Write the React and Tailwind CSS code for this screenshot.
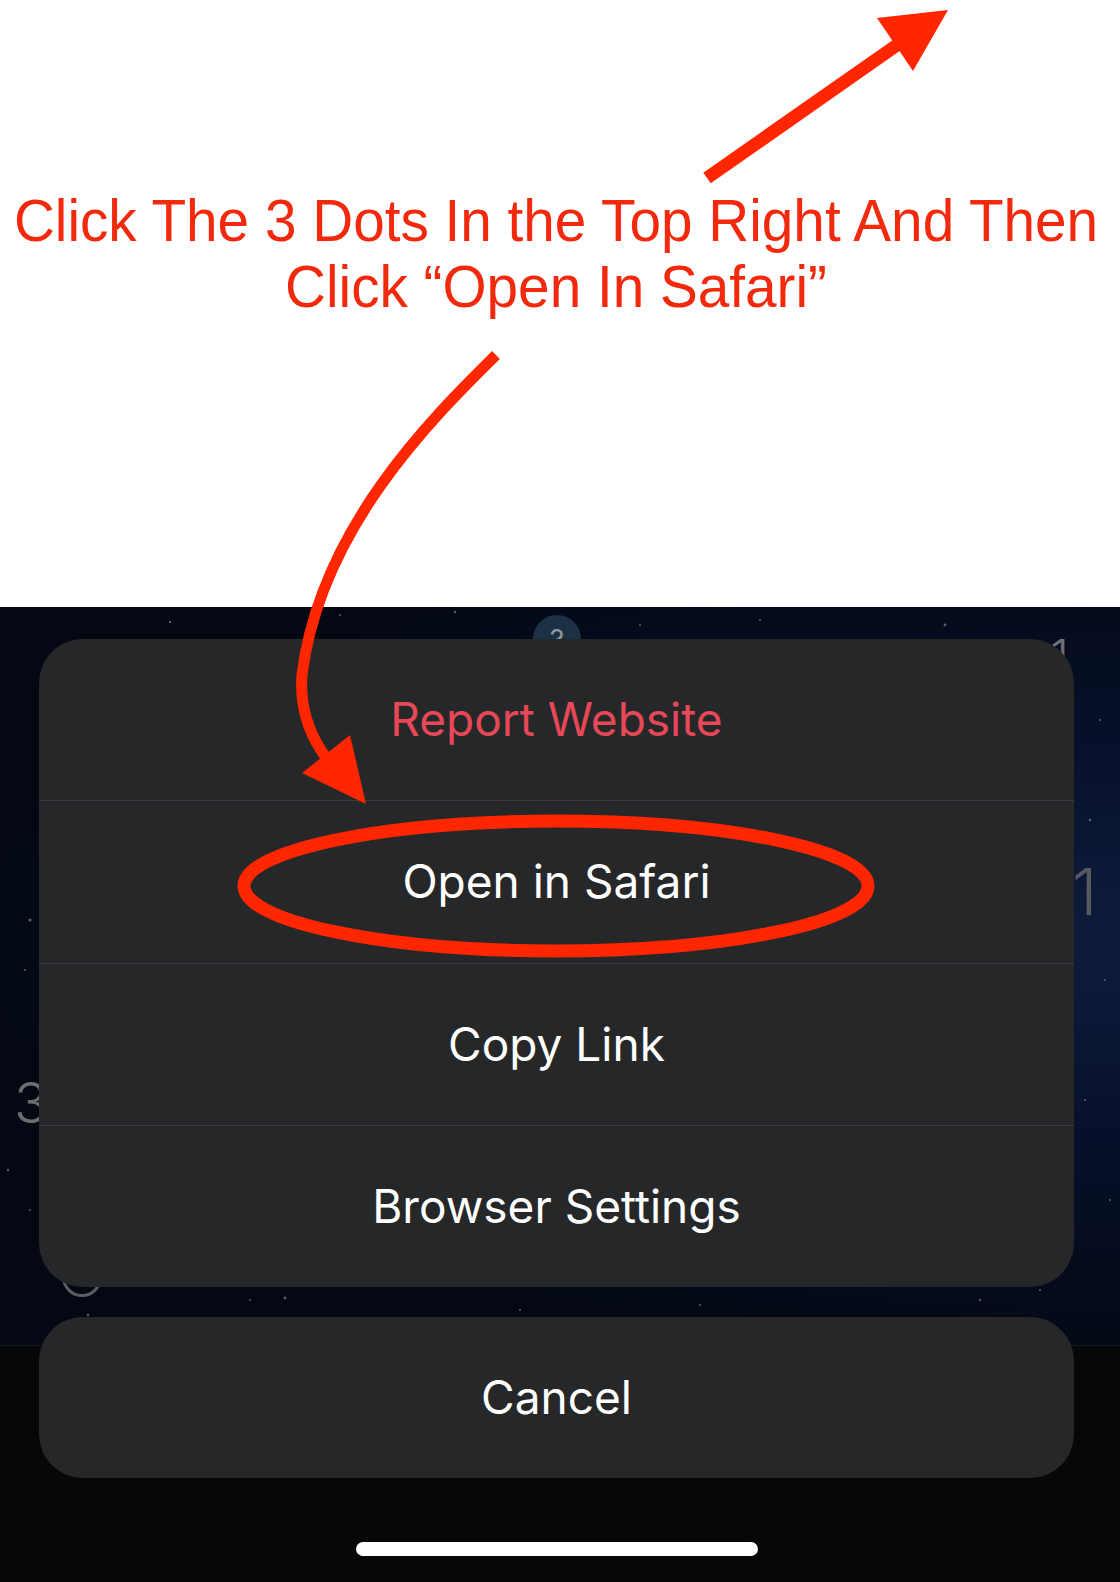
const stars = [
  [170, 622, 1.2], [205, 640, 1], [340, 615, 1], [455, 612, 1.2], [640, 625, 1], [760, 620, 1],
  [945, 625, 1.4], [995, 650, 1], [1100, 720, 1], [1090, 820, 1.2], [1105, 980, 1], [1085, 1100, 1],
  [30, 920, 1.6], [25, 970, 1], [8, 1170, 1.2], [30, 1210, 1], [88, 1315, 1.2], [250, 1300, 1],
  [285, 1298, 1.4], [350, 1330, 1], [520, 1310, 1], [700, 1305, 1], [840, 1320, 1], [980, 1300, 1.2],
  [1040, 1290, 1], [1110, 1200, 1],
];

function Annotations() {
  return (
    <svg className="absolute inset-0 pointer-events-none" width="1120" height="1582" viewBox="0 0 1120 1582">
      {/* arrow to the top right */}
      <line x1="707" y1="178" x2="897" y2="45" stroke="#ff2600" strokeWidth="13" />
      <polygon points="877,18 948,10 913,71" fill="#ff2600" />
      {/* curved arrow down to the menu */}
      <path
        d="M496 355 C430 420 320 530 302 675 C299 712 312 742 334 768"
        fill="none"
        stroke="#ff2600"
        strokeWidth="11"
      />
      <polygon points="302,773 350,735 366,804" fill="#ff2600" />
      {/* circle round Open in Safari */}
      <ellipse cx="556" cy="886" rx="312" ry="65" fill="none" stroke="#ff2600" strokeWidth="13" />
    </svg>
  );
}

function Backdrop() {
  return (
    <div className="absolute left-0 top-0 w-full h-[739px] bg-[radial-gradient(ellipse_at_100%_45%,#0e1c3c_0%,#07102a_35%,#030812_75%)] border-b border-[#18191c]">
      <svg className="absolute inset-0" width="1120" height="739">
        {stars.map(([x, y, r], i) => (
          <circle key={i} cx={x} cy={y - 607} r={r} fill="#8a9ab8" opacity="0.6" />
        ))}
      </svg>
      <div className="absolute left-[533px] top-[8px] w-[48px] h-[48px] rounded-full bg-[#1c3144] flex items-start justify-center pt-[4px] text-[#8d959c] text-[28px] font-['Inter',sans-serif]">
        ?
      </div>
      <div className="absolute left-[1050px] top-[26px] text-[#6d6f73] text-[48px] leading-none font-['Inter',sans-serif] font-light">1</div>
      <div className="absolute left-[1072px] top-[253px] text-[#56595e] text-[64px] leading-none font-['Inter',sans-serif] font-light">1</div>
      <div className="absolute left-[14px] top-[468px] text-[#6b6d71] text-[56px] leading-none font-['Inter',sans-serif] font-light">3</div>
      <div className="absolute left-[62px] top-[650px] w-[40px] h-[40px] rounded-full border-[3px] border-[#5a5c60]" />
    </div>
  );
}

function SheetRow({ label, danger, first }) {
  return (
    <div
      className={`flex-1 flex items-center justify-center ${first ? '' : 'border-t border-[#3b3c3f]'}`}
    >
      <span className={`text-[46px] font-['Inter',sans-serif] ${danger ? 'text-[#e64857]' : 'text-white'}`}>
        {label}
      </span>
    </div>
  );
}

export default function App() {
  return (
    <div className="relative w-[1120px] h-[1582px] overflow-hidden bg-white">
      <div className="h-[607px] pt-[188px]">
        <div className="w-[1112px] flex flex-col items-center scale-x-[0.945] whitespace-nowrap text-[60px] leading-[66px] text-[#f2290c] font-['Liberation_Sans',Arial,sans-serif]">
          <p>Click The 3 Dots In the Top Right And Then</p>
          <p>Click “Open In Safari”</p>
        </div>
      </div>

      <div className="relative h-[975px] bg-[#060709]">
        <Backdrop />
        <div className="relative flex flex-col pt-[32px]">
          <div className="ml-[39px] w-[1035px] h-[648px] rounded-[44px] bg-[#262729] flex flex-col overflow-hidden">
            <SheetRow label="Report Website" danger first />
            <SheetRow label="Open in Safari" />
            <SheetRow label="Copy Link" />
            <SheetRow label="Browser Settings" />
          </div>
          <div className="ml-[39px] mt-[30px] w-[1035px] h-[161px] rounded-[44px] bg-[#262729] flex items-center justify-center">
            <span className="text-[46px] font-['Inter',sans-serif] text-white">Cancel</span>
          </div>
          <div className="mt-[64px] ml-[356px] w-[402px] h-[14px] rounded-full bg-white" />
        </div>
      </div>

      <Annotations />
    </div>
  );
}
